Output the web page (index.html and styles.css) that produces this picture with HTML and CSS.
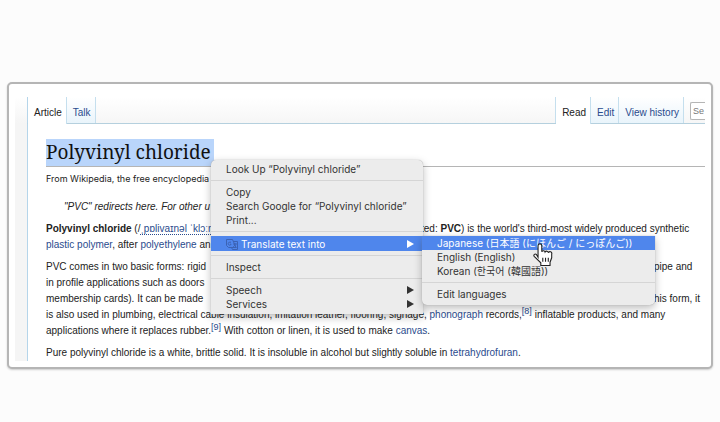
FILE: index.html
```html
<!DOCTYPE html>
<html lang="en">
<head>
<meta charset="utf-8">
<title>Polyvinyl chloride</title>
<link rel="stylesheet" href="styles.css">
</head>
<body>
<main class="card">
  <div class="page">
    <nav class="tabs">
      <a class="tab current" href="#article">Article</a>
      <a class="tab" href="#talk">Talk</a>
      <span class="spacer"></span>
      <a class="tab current" href="#read">Read</a>
      <a class="tab" href="#edit">Edit</a>
      <a class="tab" href="#history">View history</a>
      <input class="search" type="text" placeholder="Se" aria-label="Search">
    </nav>
    <article class="article">
      <h1 class="title"><span class="selected">Polyvinyl chloride</span></h1>
      <p class="sub">From Wikipedia, the free encyclopedia</p>
      <p class="note">"PVC" redirects here. For other u</p>
      <p class="para">
        <span class="line split"><span><b>Polyvinyl chloride</b> (/<a class="ipa" href="#ipa">ˌpɒlivaɪnəl ˈklɔːr</a></span><span>ted: <b>PVC</b>) is the world's third-most widely produced synthetic</span></span>
        <span class="line"><a href="#plastic">plastic polymer</a>, after <a href="#polyethylene">polyethylene</a> an</span>
      </p>
      <p class="para">
        <span class="line split far"><span>PVC comes in two basic forms: rigid</span><span>pipe and</span></span>
        <span class="line">in profile applications such as doors</span>
        <span class="line split far"><span>membership cards). It can be made</span><span>his form, it</span></span>
        <span class="line">is also used in plumbing, electrical cable insulation, imitation leather, flooring, signage, <a href="#phonograph">phonograph</a> records,<a class="ref" href="#r8">[8]</a> inflatable products, and many</span>
        <span class="line">applications where it replaces rubber.<a class="ref" href="#r9">[9]</a> With cotton or linen, it is used to make <a href="#canvas">canvas</a>.</span>
      </p>
      <p class="para">
        <span class="line">Pure polyvinyl chloride is a white, brittle solid. It is insoluble in alcohol but slightly soluble in <a href="#thf">tetrahydrofuran</a>.</span>
      </p>
    </article>
  </div>

  <div class="menu main-menu">
    <button class="item">Look Up “Polyvinyl chloride”</button>
    <hr>
    <button class="item">Copy</button>
    <button class="item">Search Google for “Polyvinyl chloride”</button>
    <button class="item">Print...</button>
    <hr>
    <button class="item active tall">
      <svg class="icon" viewBox="0 0 12 12" aria-hidden="true"><path d="M.5 1.500h6l3.500 8h-7.500l-2-2zM7 3.500h4.500v8h-5l-1-2M5 4.200H3.800a1.500 1.500 0 1 0 1.300 2H4M7 6h4M9 5v1c0 1.500-1 2.500-2 3M8 7l2.500 2.500"/></svg>
      Translate text into<i class="arrow"></i>
    </button>
    <hr>
    <button class="item">Inspect</button>
    <hr>
    <button class="item">Speech<i class="arrow"></i></button>
    <button class="item">Services<i class="arrow"></i></button>
  </div>

  <div class="menu sub-menu">
    <button class="item active">Japanese (日本語 (にほんご / にっぽんご))</button>
    <button class="item">English (English)</button>
    <button class="item">Korean (한국어 (韓國語))</button>
    <hr>
    <button class="item">Edit languages</button>
  </div>

  <svg class="pointer" viewBox="0 0 20 22" aria-hidden="true"><path d="M5.500 13.500V3a1.700 1.700 0 0 1 3.400 0v5.500a1.600 1.600 0 0 1 3 .3 1.600 1.600 0 0 1 3 .7 1.500 1.500 0 0 1 3 1v3.500l-1.500 4V21H8v-2.500L2 12.700c-1-1.500.8-2.800 2-1.700z"/><path d="M9.800 14v3.500M12.300 14v3.500M14.800 14v3.500"/></svg>
</main>
</body>
</html>
```
FILE: styles.css
```css
* {
  box-sizing: border-box;
}

body {
  margin: 0;
  padding: 82px 7px 54px;
  background: #fcfcfc;
  color: #222;
  font: 10px/16px "Liberation Sans", Arial, sans-serif;
}

a {
  color: #2a4b8d;
  text-decoration: none;
}

.card {
  position: relative;
  padding: 13px 6px 6px;
  border: 2px solid #b5b5b5;
  border-radius: 5px;
  background: #fff;
  box-shadow: 0 1px 2px #ccc;
}

.page {
  padding-left: 12px;
  background: linear-gradient(#fff, #f5f5f5 26px);
  overflow: hidden;
}

.tabs {
  display: flex;
  height: 27px;
  border-left: 1px solid #b5d5ea;
  border-bottom: 1px solid #b5d0de;
  background: linear-gradient(#fff, #f6f6f6);
}

.tab {
  padding: 8px 4px 0 6px;
  border-right: 1px solid #c5dfee;
  background: linear-gradient(#fff, #e9f4fb);
  white-space: nowrap;
}

.tab.current {
  margin-bottom: -1px;
  background: #fff;
  color: #222;
}

.spacer {
  flex: 1;
  border-right: 1px solid #c5dfee;
}

.search {
  width: 15px;
  height: 18px;
  margin: 5px 0 0 6px;
  padding: 0 0 0 2px;
  border: 1px solid #b5b5b5;
  border-right: 0;
  border-radius: 2px 0 0 2px;
  background: #fff;
  font: 9px "Liberation Sans", Arial, sans-serif;
}

.search::placeholder {
  color: #777;
}

.article {
  padding: 15px 0 0 18px;
  border-left: 1px solid #b5d5ea;
  background: #fff;
}

.title {
  height: 28px;
  margin: 0 0 4px;
  border-bottom: 1px solid #b5b5b5;
  color: #111;
  font: 19px/27px "Noto Serif", Georgia, "Liberation Serif", serif;
}

.selected {
  display: inline-block;
  padding-right: 3px;
  background: #b9d5fb;
}

.sub,
.note,
.para {
  margin: 0;
  white-space: nowrap;
}

.sub {
  font-family: Inter, sans-serif;
  font-size: 9px;
}

.note {
  margin: 12px 0 6px 18px;
  font-style: italic;
}

.para {
  margin-bottom: 6px;
}

.para:last-child {
  margin-bottom: 0;
}

.line {
  display: block;
}

.split {
  display: grid;
  grid-template-columns: 375px auto;
}

.far {
  grid-template-columns: 608px auto;
}

.ipa {
  border-bottom: 1px dotted #2a4b8d;
}

.ref {
  font-size: 9px;
  line-height: 1;
  vertical-align: 4px;
}

.menu {
  position: absolute;
  background: #ececec;
  box-shadow: 0 0 1px #999, 0 3px 8px #0004;
}

.main-menu {
  top: 76px;
  left: 202px;
  width: 212px;
  padding: 2px 0 3px;
  border-radius: 5px 5px 0 0;
}

.sub-menu {
  top: 152px;
  left: 413px;
  width: 233px;
  padding-bottom: 4px;
  border-radius: 0 0 5px 5px;
}

.item {
  display: flex;
  align-items: center;
  width: 100%;
  height: 14px;
  padding: 0 9px 0 15px;
  border: 0;
  background: none;
  color: #333;
  font: 10px/14px Inter, "Noto Sans CJK JP", "Noto Sans CJK KR", sans-serif;
  text-align: left;
  white-space: nowrap;
}

.item.active {
  background: #4f86ec;
  color: #fff;
}

.item.tall {
  height: 15px;
}

.menu hr {
  height: 1px;
  margin: 4px 0;
  border: 0;
  background: #d5d5d5;
}

.arrow {
  margin-left: auto;
  border-left: 7px solid;
  border-top: 4px solid transparent;
  border-bottom: 4px solid transparent;
}

.icon {
  width: 12px;
  height: 12px;
  margin-right: 3px;
  fill: none;
  stroke: #3c63b4;
}

.pointer {
  position: absolute;
  top: 158px;
  left: 523px;
  width: 22px;
  height: 25px;
  fill: #fff;
  stroke: #222;
}
```
